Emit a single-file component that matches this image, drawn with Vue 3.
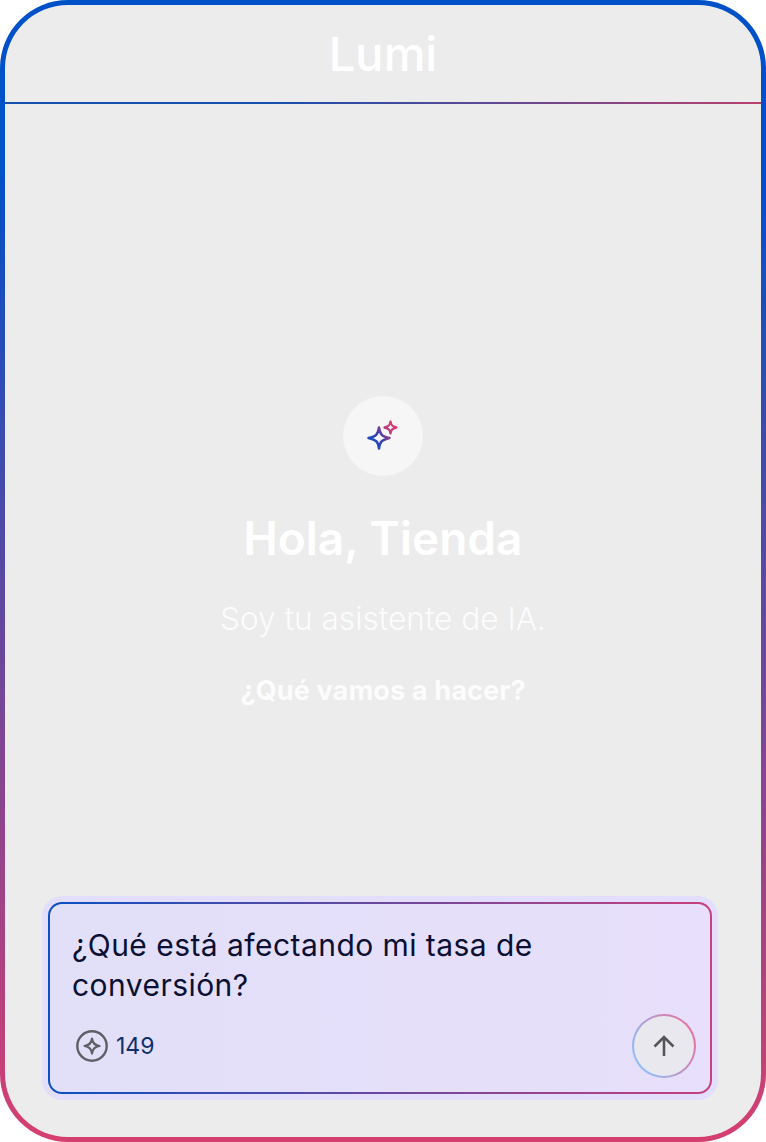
<script setup>
import { ref } from 'vue';
const userName = ref('Tienda');
const question = ref('¿Qué está afectando mi tasa de conversión?');
const credits = ref(149);
</script>

<template>
  <div class="frame">
    <header class="top">
      <h1>Lumi</h1>
    </header>
    <main class="welcome">
      <div class="spark-badge">
        <svg width="34" height="34" viewBox="0 0 34 34" fill="none">
          <defs>
            <linearGradient id="spark" x1="3" y1="26" x2="30" y2="6" gradientUnits="userSpaceOnUse">
              <stop offset="0" stop-color="#0b4fc4" />
              <stop offset="0.42" stop-color="#3d40ac" />
              <stop offset="0.72" stop-color="#c03c80" />
              <stop offset="1" stop-color="#d8406f" />
            </linearGradient>
          </defs>
          <path d="M13 8.5C13.9 15 15.6 17.2 23.5 19C15.6 20.8 13.9 23 13 29.5C12.1 23 10.4 20.8 2.5 19C10.4 17.2 12.1 15 13 8.5Z" stroke="url(#spark)" stroke-width="2.5" stroke-linejoin="round" />
          <path d="M24.5 2.8C25.1 6.3 26.2 7.6 30.4 8.5C26.2 9.4 25.1 10.7 24.5 14.2C23.9 10.7 22.8 9.4 18.6 8.5C22.8 7.6 23.9 6.3 24.5 2.8Z" stroke="url(#spark)" stroke-width="2.4" stroke-linejoin="round" />
        </svg>
      </div>
      <h2>Hola, {{ userName }}</h2>
      <p class="intro">Soy tu asistente de IA.</p>
      <p class="ask">¿Qué vamos a hacer?</p>
    </main>
    <div class="composer-halo">
      <div class="composer">
        <p class="question">{{ question }}</p>
        <div class="composer-foot">
          <div class="credits">
            <svg width="34" height="34" viewBox="0 0 34 34" fill="none">
              <circle cx="17" cy="17" r="14.7" stroke="#5f5f66" stroke-width="2.4" />
              <path d="M17 9.5C17.6 14.4 19.6 16.4 24.5 17C19.6 17.6 17.6 19.6 17 24.5C16.4 19.6 14.4 17.6 9.5 17C14.4 16.4 16.4 14.4 17 9.5Z" stroke="#5f5f66" stroke-width="2.2" stroke-linejoin="round" />
            </svg>
            <span>{{ credits }}</span>
          </div>
          <button class="send" type="button" aria-label="Enviar">
            <svg width="24" height="24" viewBox="0 0 24 24" fill="none">
              <path d="M12 22V3M2.5 12.5L12 3L21.5 12.5" stroke="#555558" stroke-width="2.6" />
            </svg>
          </button>
        </div>
      </div>
    </div>
  </div>
</template>

<style scoped>
.frame {
  box-sizing: border-box;
  width: 766px;
  height: 1142px;
  border: 5px solid transparent;
  border-radius: 68px;
  background:
    linear-gradient(#ececec, #ececec) padding-box,
    linear-gradient(180deg, #0050c8 15%, #d63f70 100%) border-box;
  display: flex;
  flex-direction: column;
  font-family: Inter, "Liberation Sans", sans-serif;
  overflow: hidden;
}
.top {
  height: 99px;
  flex: none;
  display: flex;
  align-items: center;
  justify-content: center;
  position: relative;
  box-sizing: border-box;
  padding-bottom: 2px;
}
.top::after {
  content: "";
  position: absolute;
  left: 0;
  right: 0;
  bottom: 0;
  height: 2px;
  background: linear-gradient(90deg, #164fae 35%, #b8406f 100%);
}
h1 {
  margin: 0;
  color: #fff;
  font-size: 47px;
  font-weight: 450;
  line-height: 56px;
}
.welcome {
  flex: 1;
  display: flex;
  flex-direction: column;
  align-items: center;
  padding-top: 292px;
  color: #fff;
}
.spark-badge {
  width: 80px;
  height: 80px;
  border-radius: 50%;
  background: #f6f6f7;
  display: flex;
  align-items: center;
  justify-content: center;
}
h2 {
  margin: 34px 0 0;
  font-size: 46px;
  font-weight: 600;
  line-height: 56px;
}
.intro {
  margin: 35px 0 0;
  font-size: 31.6px;
  font-weight: 300;
  line-height: 36px;
  opacity: 0.85;
}
.ask {
  margin: 38px 0 0;
  font-size: 27.3px;
  font-weight: 700;
  line-height: 32px;
  opacity: 0.85;
}
.composer-halo {
  flex: none;
  margin: 0 43px 37px 37px;
  padding: 6px;
  border-radius: 20px;
  background: #e3defb;
}
.composer {
  box-sizing: border-box;
  height: 192px;
  border: 2px solid transparent;
  border-radius: 14px;
  background:
    linear-gradient(90deg, #e2dff9, #e7dffb) padding-box,
    linear-gradient(90deg, #0b4fc0 0%, #c8407c 100%) border-box;
  padding: 21px 14px 14px 22px;
  display: flex;
  flex-direction: column;
  justify-content: space-between;
}
.question {
  margin: 0;
  font-size: 30px;
  letter-spacing: 0.45px;
  line-height: 40px;
  color: #0a0f33;
  max-width: 560px;
}
.composer-foot {
  display: flex;
  align-items: center;
  justify-content: space-between;
}
.credits {
  display: flex;
  align-items: center;
  gap: 7px;
  font-size: 23px;
  color: #10306a;
  padding-left: 3px;
}
.send {
  box-sizing: border-box;
  width: 64px;
  height: 64px;
  padding: 0;
  border: 2px solid transparent;
  border-radius: 50%;
  background:
    linear-gradient(#e9e8ee, #e9e8ee) padding-box,
    linear-gradient(60deg, #8fbcf8 15%, #e8709c 90%) border-box;
  display: flex;
  align-items: center;
  justify-content: center;
}
</style>
